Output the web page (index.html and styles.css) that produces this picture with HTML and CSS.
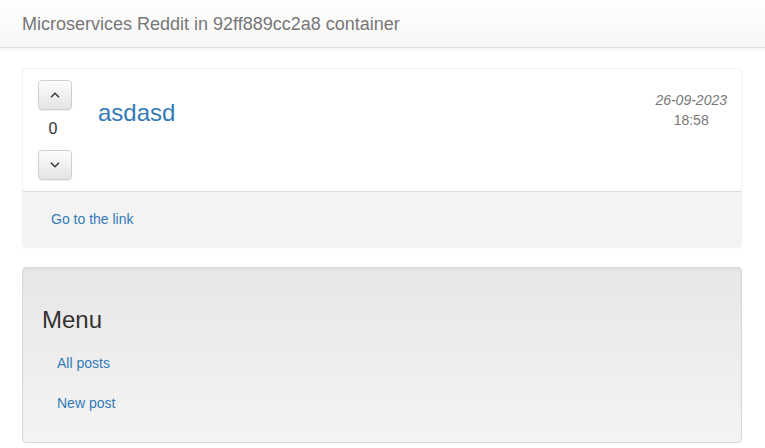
FILE: index.html
```html
<!DOCTYPE html>
<html lang="en">
<head>
<meta charset="utf-8">
<title>Microservices Reddit</title>
<link rel="stylesheet" href="styles.css">
</head>
<body>
<nav class="navbar">
  <a class="brand" href="#">Microservices Reddit in 92ff889cc2a8 container</a>
</nav>
<main class="container">
  <section class="panel">
    <div class="panel-body">
      <div class="vote">
        <button class="btn" type="button" aria-label="Upvote">
          <svg width="10" height="6" viewBox="0 0 10 6"><polyline points="1,5.2 5,1.2 9,5.2" fill="none" stroke="#333" stroke-width="1.4"/></svg>
        </button>
        <div class="score">0</div>
        <button class="btn" type="button" aria-label="Downvote">
          <svg width="10" height="6" viewBox="0 0 10 6"><polyline points="1,0.8 5,4.8 9,0.8" fill="none" stroke="#333" stroke-width="1.4"/></svg>
        </button>
      </div>
      <h3 class="post-title"><a href="#">asdasd</a></h3>
      <div class="meta">
        <div class="date">26-09-2023</div>
        <div class="time">18:58</div>
      </div>
    </div>
    <div class="panel-footer">
      <a href="#">Go to the link</a>
    </div>
  </section>
  <section class="well">
    <h3 class="menu-title">Menu</h3>
    <ul class="nav">
      <li><a href="#">All posts</a></li>
      <li><a href="#">New post</a></li>
    </ul>
  </section>
</main>
</body>
</html>
```
FILE: styles.css
```css
* { box-sizing: border-box; }
html, body { margin: 0; padding: 0; }
body {
  font-family: "Liberation Sans", Arial, Helvetica, sans-serif;
  font-size: 14px;
  line-height: 20px;
  color: #333;
  background: #fff;
}
a { color: #337ab7; text-decoration: none; }

.navbar {
  height: 48px;
  padding: 14px 22px 0;
  background: linear-gradient(to bottom, #ffffff 0%, #f6f6f6 100%);
  border-bottom: 1px solid #e2e2e2;
  box-shadow: 0 1px 5px rgba(0,0,0,0.07);
  margin-bottom: 20px;
}
.brand {
  font-size: 18px;
  line-height: 20px;
  color: #777;
}

.container {
  padding: 0 23px 0 22px;
}

.panel {
  border: 1px solid #f3f3f3;
  border-radius: 4px;
  box-shadow: 0 1px 2px rgba(0,0,0,0.06);
  margin-bottom: 20px;
  background: #fff;
}
.panel-body {
  display: flex;
  align-items: flex-start;
  padding: 11px 14px 11px 15px;
}
.vote {
  width: 34px;
  display: flex;
  flex-direction: column;
  align-items: center;
}
.btn {
  width: 34px;
  height: 30px;
  padding: 0;
  display: flex;
  align-items: center;
  justify-content: center;
  border: 1px solid #cfcfcf;
  border-radius: 4px;
  background: linear-gradient(to bottom, #fdfdfd 0%, #e4e4e4 100%);
  box-shadow: 0 1px 1px rgba(0,0,0,0.07);
}
.score {
  height: 40px;
  line-height: 38px;
  font-size: 16px;
  color: #333;
  padding-right: 4px;
}
.post-title {
  margin: 20px 0 10px 26px;
  font-size: 24px;
  font-weight: normal;
  line-height: 26px;
}
.meta {
  margin-left: auto;
  margin-top: 10px;
  text-align: center;
  color: #777;
}
.date { font-style: italic; }

.panel-footer {
  background: #f3f3f3;
  border-top: 1px solid #dcdcdc;
  padding: 17px 28px;
  border-radius: 0 0 4px 4px;
}

.well {
  padding: 19px;
  border: 1px solid #d9d9d9;
  border-radius: 4px;
  background: linear-gradient(to bottom, #e7e7e7 0%, #f4f4f4 100%);
  box-shadow: inset 0 1px 3px rgba(0,0,0,0.05);
}
.menu-title {
  margin: 20px 0 10px;
  font-size: 24px;
  font-weight: normal;
  line-height: 26px;
  color: #333;
}
.nav {
  list-style: none;
  margin: 0;
  padding: 0;
}
.nav li a {
  display: block;
  padding: 10px 15px;
}
```
